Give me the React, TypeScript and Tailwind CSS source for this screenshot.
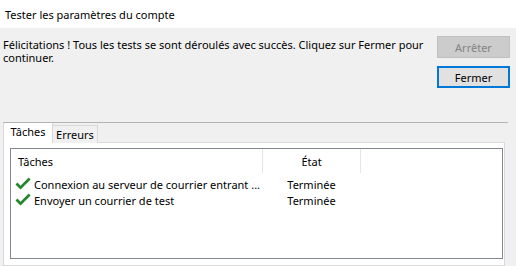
import React from "react";

function Check() {
  return (
    <svg width="16" height="14" viewBox="0 0 16 14" className="shrink-0">
      <polygon points="0.5,7.5 2.5,5.5 5.5,8.8 13.8,0.6 15.6,2.4 5.5,12.6" fill="#22862a" />
    </svg>
  );
}

export default function App() {
  return (
    <div className="w-[516px] h-[266px] bg-[#f0f0f0] flex flex-col overflow-hidden font-['Noto_Sans',sans-serif] text-[11px] text-black leading-[13px]">
      <div className="h-[28px] bg-white flex items-center pl-[5px] shrink-0">
        <span>Tester les paramètres du compte</span>
      </div>
      <div className="h-[94px] flex shrink-0">
        <div className="pl-[3px] pt-[10px] whitespace-nowrap flex-1 min-w-0">
          Félicitations ! Tous les tests se sont déroulés avec succès. Cliquez sur Fermer pour
          <br />
          continuer.
        </div>
        <div className="mr-[6px] pt-[8px] flex flex-col gap-[8px] shrink-0">
          <div className="w-[73px] h-[22px] bg-[#cccccc] border border-[#bfbfbf] text-[#838383] flex items-center justify-center">
            Arrêter
          </div>
          <div className="w-[73px] h-[22px] bg-[#e1e1e1] border-2 border-[#0078d7] flex items-center justify-center">
            Fermer
          </div>
        </div>
      </div>
      <div className="ml-[3px] w-[505px] h-px bg-[#b4b4b4] shrink-0" />
      <div className="flex ml-[3px] h-[20px] shrink-0 relative z-10 -mb-px">
        <div className="w-[50px] bg-white border-l border-r border-[#d9d9d9] flex items-center justify-center pb-[3px]">
          Tâches
        </div>
        <div className="mt-[2px] w-[45px] bg-[#f0f0f0] border-t border-r border-[#d9d9d9] flex items-center justify-center">
          Erreurs
        </div>
      </div>
      <div className="ml-[3px] w-[502px] h-[124px] bg-white border border-[#d9d9d9] pl-[6px] pt-[5px] shrink-0">
        <div className="w-[493px] h-[111px] border border-[#828790] bg-white">
          <div className="flex h-[24px]">
            <div className="w-[251px] pl-[7px] flex items-center">Tâches</div>
            <div className="w-[99px] border-l border-r border-[#e5e5e5] flex items-center justify-center">État</div>
          </div>
          <div className="mt-[3px] flex flex-col">
            <div className="flex h-[16px] items-center">
              <div className="w-[251px] pl-[4px] flex items-center gap-[3px] whitespace-nowrap">
                <Check />
                <span>Connexion au serveur de courrier entrant ...</span>
              </div>
              <div className="w-[99px] text-center">Terminée</div>
            </div>
            <div className="flex h-[16px] items-center">
              <div className="w-[251px] pl-[4px] flex items-center gap-[3px] whitespace-nowrap">
                <Check />
                <span>Envoyer un courrier de test</span>
              </div>
              <div className="w-[99px] text-center">Terminée</div>
            </div>
          </div>
        </div>
      </div>
    </div>
  );
}
